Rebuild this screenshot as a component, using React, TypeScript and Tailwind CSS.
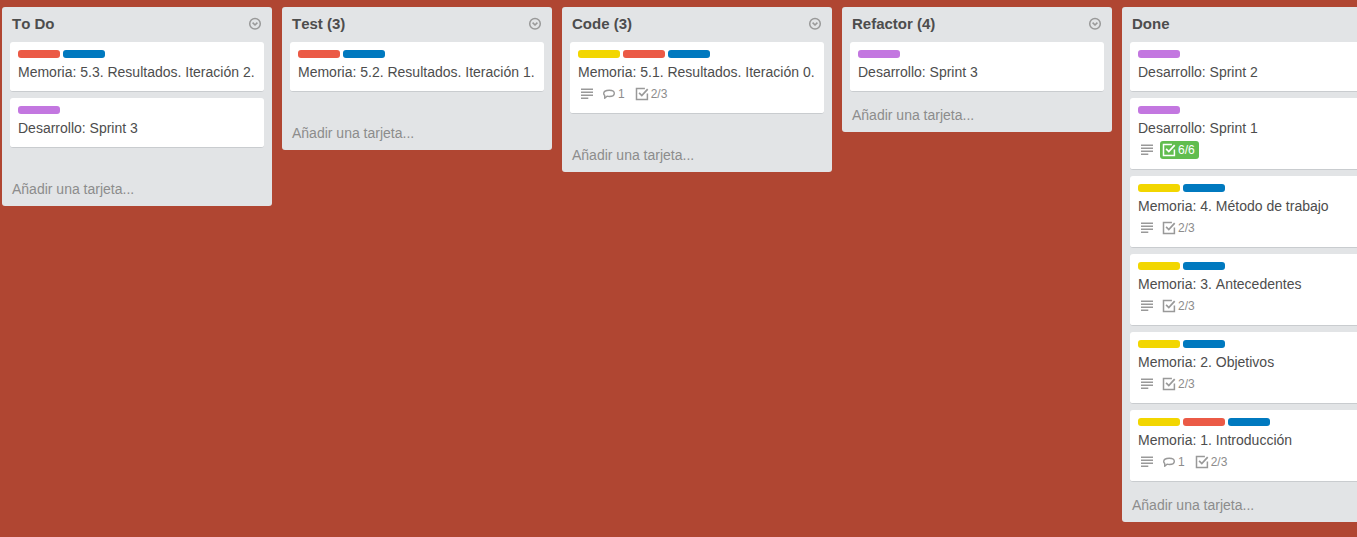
type Color = 'red' | 'blue' | 'yellow' | 'purple';

interface CardData {
  title: string;
  labels: Color[];
  description?: boolean;
  comments?: number;
  checklist?: string;
  complete?: boolean;
}

interface ListData {
  title: string;
  cards: CardData[];
  roomy?: boolean;
}

const colors: Record<Color, string> = {
  red: 'bg-[#eb5a46]',
  blue: 'bg-[#0079bf]',
  yellow: 'bg-[#f2d600]',
  purple: 'bg-[#c377e0]',
};

const lists: ListData[] = [
  {
    title: 'To Do',
    roomy: true,
    cards: [
      { title: 'Memoria: 5.3. Resultados. Iteración 2.', labels: ['red', 'blue'] },
      { title: 'Desarrollo: Sprint 3', labels: ['purple'] },
    ],
  },
  {
    title: 'Test (3)',
    roomy: true,
    cards: [{ title: 'Memoria: 5.2. Resultados. Iteración 1.', labels: ['red', 'blue'] }],
  },
  {
    title: 'Code (3)',
    roomy: true,
    cards: [
      {
        title: 'Memoria: 5.1. Resultados. Iteración 0.',
        labels: ['yellow', 'red', 'blue'],
        description: true,
        comments: 1,
        checklist: '2/3',
      },
    ],
  },
  {
    title: 'Refactor (4)',
    cards: [{ title: 'Desarrollo: Sprint 3', labels: ['purple'] }],
  },
  {
    title: 'Done',
    cards: [
      { title: 'Desarrollo: Sprint 2', labels: ['purple'] },
      { title: 'Desarrollo: Sprint 1', labels: ['purple'], description: true, checklist: '6/6', complete: true },
      { title: 'Memoria: 4. Método de trabajo', labels: ['yellow', 'blue'], description: true, checklist: '2/3' },
      { title: 'Memoria: 3. Antecedentes', labels: ['yellow', 'blue'], description: true, checklist: '2/3' },
      { title: 'Memoria: 2. Objetivos', labels: ['yellow', 'blue'], description: true, checklist: '2/3' },
      {
        title: 'Memoria: 1. Introducción',
        labels: ['yellow', 'red', 'blue'],
        description: true,
        comments: 1,
        checklist: '2/3',
      },
    ],
  },
];

const iconProps = {
  width: 18,
  height: 18,
  viewBox: '0 0 18 18',
  fill: 'none',
  stroke: 'currentColor',
};

function MenuIcon() {
  return (
    <svg {...iconProps} className="shrink-0 text-[#999]" strokeWidth="1.5">
      <circle cx="9" cy="8.8" r="5.3" />
      <path d="M6.6 7.700 9 10l2.400-2.300" strokeWidth="1.6" />
    </svg>
  );
}

function DescriptionIcon() {
  return (
    <svg {...iconProps} className="shrink-0 text-[#999]" strokeWidth="1.4">
      <path d="M3 4.300h12M3 7.300h12M3 10.300h12M3 13.300h7.300" />
    </svg>
  );
}

function CommentIcon() {
  return (
    <svg {...iconProps} className="shrink-0 text-[#999]" strokeWidth="1.4" strokeLinejoin="round">
      <path d="M9.300 5.200c3.200 0 5 1.300 5 3.100s-1.800 3.200-4.800 3.200c-1 0-1.800-.1-2.500-.3L4.700 13.200V10.400C4 9.900 3.700 9.300 3.700 8.500 3.700 6.500 5.900 5.200 9.300 5.200Z" />
    </svg>
  );
}

function CheckIcon({ light }: { light?: boolean }) {
  return (
    <svg {...iconProps} className={`shrink-0 ${light ? 'text-white' : 'text-[#999]'}`} strokeWidth="1.5">
      <path d="M11.900 3.500H3.500v10.900h10.900V8.500" />
      <path d="M6.100 7.900 8.800 10.600 14.700 4.100" strokeWidth="1.7" />
    </svg>
  );
}

function Card({ card }: { card: CardData }) {
  return (
    <article className="rounded-[3px] border-b border-[#c9cccf] bg-white px-2 pt-2 pb-2.5">
      <div className="mb-[5px] flex gap-[3px]">
        {card.labels.map((label) => (
          <span key={label} className={`h-2 w-[42px] rounded-[3px] ${colors[label]}`} />
        ))}
      </div>
      <p className="text-sm leading-[18px] whitespace-nowrap text-[#4d4d4d]">{card.title}</p>
      {card.description && (
        <div className="mt-1 flex gap-1 text-xs leading-[18px] text-[#8c8c8c]">
          <DescriptionIcon />
          {card.comments && (
            <span className="flex pr-1">
              <CommentIcon />
              {card.comments}
            </span>
          )}
          <span className={`flex rounded-[3px] pr-1 ${card.complete ? 'bg-[#61bd4f] text-white' : ''}`}>
            <CheckIcon light={card.complete} />
            {card.checklist}
          </span>
        </div>
      )}
    </article>
  );
}

function List({ list }: { list: ListData }) {
  return (
    <section className="w-[270px] shrink-0 rounded-[3px] bg-[#e2e4e6]">
      <header className="flex h-[35px] items-start justify-between pt-2 pr-2 pl-2.5">
        <h2 className="text-[15px] leading-[18px] font-bold text-[#4d4d4d]">{list.title}</h2>
        <MenuIcon />
      </header>
      <div className="flex flex-col gap-1.5 px-2">
        {list.cards.map((card) => (
          <Card key={card.title} card={card} />
        ))}
      </div>
      <footer
        className={`px-2.5 pb-2 text-sm leading-[18px] text-[#8c8c8c] ${list.roomy ? 'pt-8' : 'pt-3.5'}`}
      >
        Añadir una tarjeta...
      </footer>
    </section>
  );
}

export default function App() {
  return (
    <main className="flex h-screen items-start gap-2.5 overflow-hidden bg-[#b04632] pt-[7px] pl-0.5 font-['Liberation_Sans',Arial,sans-serif] [font-kerning:none]">
      {lists.map((list) => (
        <List key={list.title} list={list} />
      ))}
    </main>
  );
}
